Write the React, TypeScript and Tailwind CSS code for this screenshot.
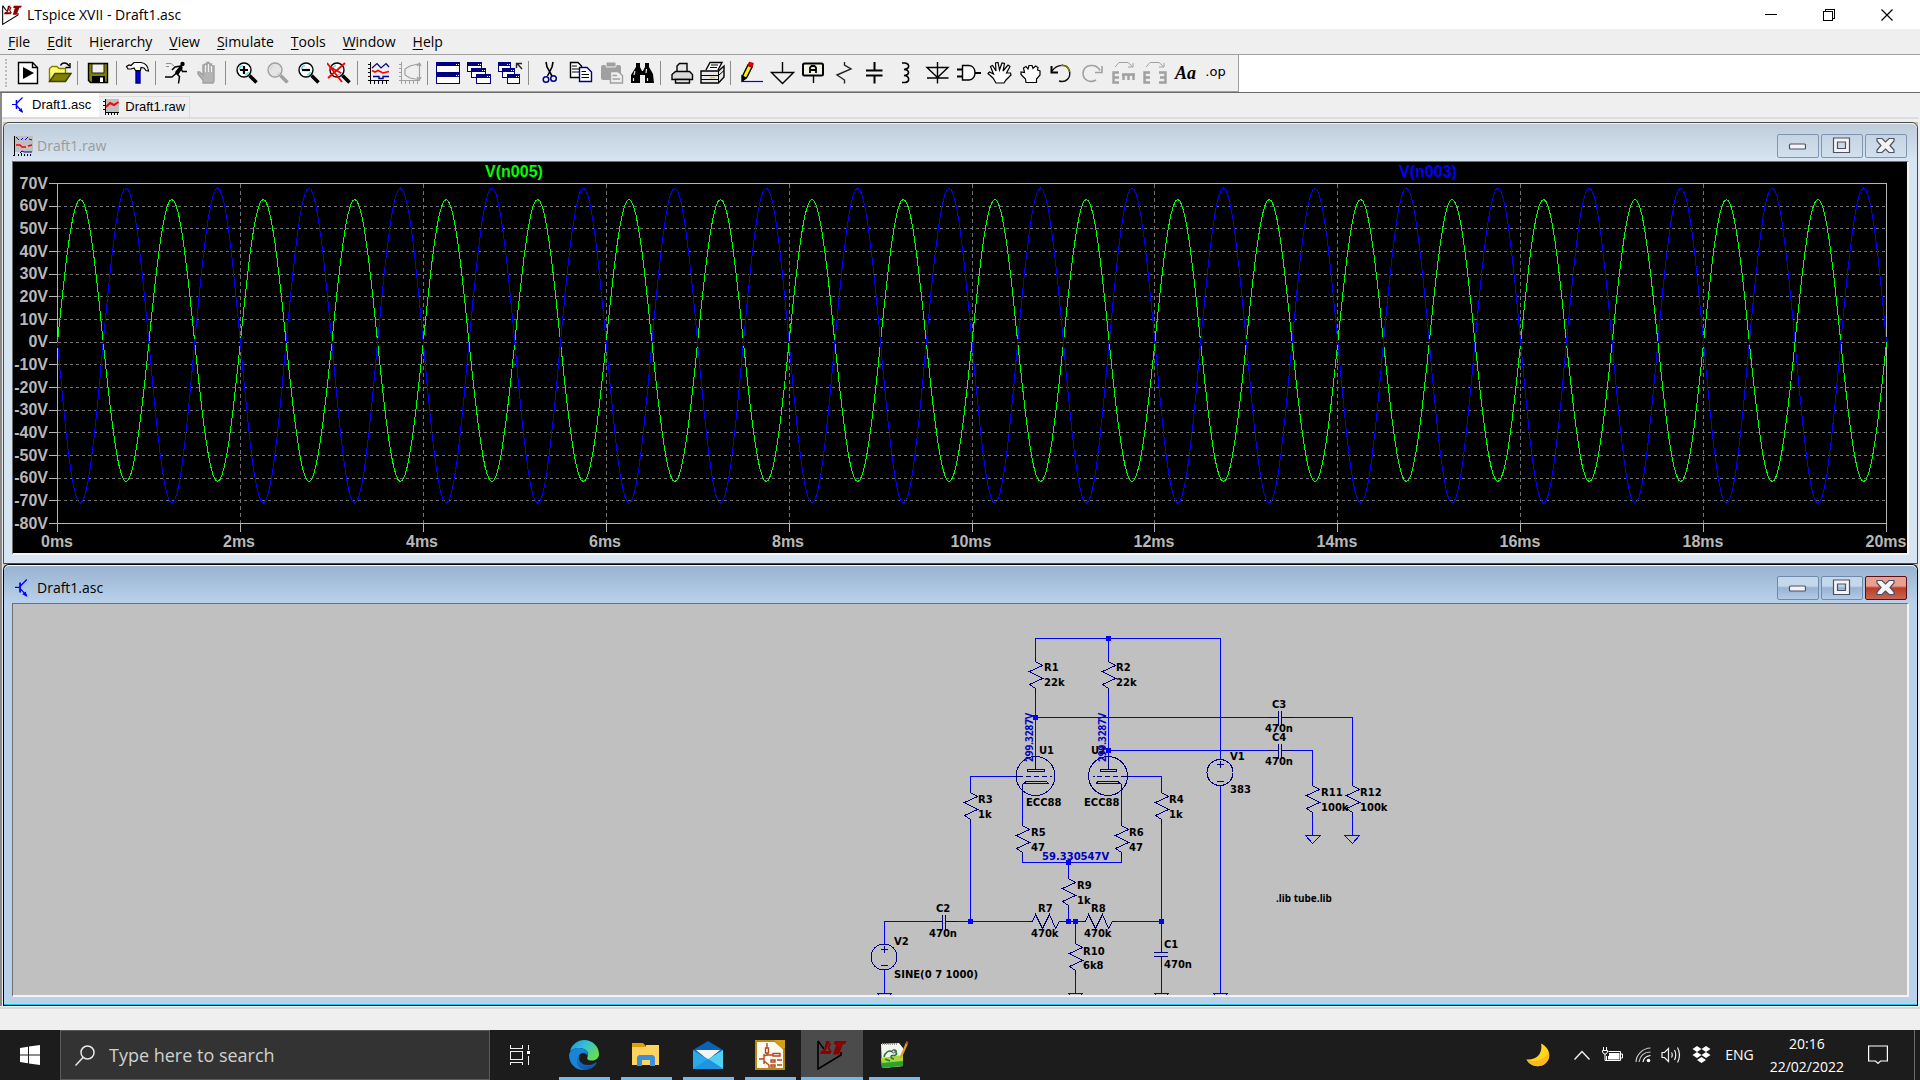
import React from "react";

/* ---------- shared bits ---------- */

type Kids = { children?: React.ReactNode };

function LtLogo({ size }: { size: string }) {
  return (
    <svg className={size} viewBox="0 0 30 30" fill="none" aria-hidden="true">
      <path d="M1 1V29L24 15V12M1 1L7 9" stroke="#000" strokeWidth="1.6" />
      <path d="M9 1H13L12 3L8.500 11H14L13 14H3L4 11L7 10Z" fill="#8b0000" />
      <path d="M18 1H30L28 4H26L22 14.500H16L20.500 4.500H17Z" fill="#8b0000" />
      <path d="M13.500 3L11.500 8L14 12.500M17.500 2L20 5L18 11" stroke="#8b0000" strokeWidth="1.600" />
    </svg>
  );
}

function Ico({ children }: Kids) {
  return (
    <svg className="h-6 w-[25px]" viewBox="0 0 25 24" fill="none" stroke="#000" strokeWidth="1.4" aria-hidden="true">
      {children}
    </svg>
  );
}

/* ---------- toolbar ---------- */

const lens = (stroke: string, glass: string) => (
  <>
    <circle cx="10" cy="9" r="7" fill={glass} stroke={stroke} />
    <path d="M5.500 9A4.500 4.500 0 0 1 9 4.500M11 14A5 5 0 0 0 14.500 11" stroke={stroke === "#000" ? "#5fe0e8" : "#d8d8d8"} strokeWidth="1.600" />
    <path d="M15.500 14.500L22.500 21.500" stroke={stroke} strokeWidth="3.600" />
  </>
);

const miniWindow = (x: number, y: number, w: number, h: number) => (
  <g key={x + "-" + y} shapeRendering="crispEdges">
    <rect x={x} y={y} width={w} height={h} fill="#fff" stroke="none" />
    <rect x={x} y={y} width={w} height={h} stroke="#000080" strokeWidth="1" fill="none" />
    <rect x={x} y={y} width={w} height="3" fill="#000080" stroke="none" />
    <rect x={x + w - 4} y={y + 1} width="1" height="1" fill="#fff" stroke="none" />
    <rect x={x + w - 2} y={y + 1} width="1" height="1" fill="#fff" stroke="none" />
  </g>
);

const axes = (c: string) => (
  <path d="M4.500 1V20M2 19.500H23M2 3.500H4M2 7.500H4M2 11.500H4M2 15.500H4M8.500 20V23M12.500 20V23M16.500 20V23M20.500 20V23M4.500 20V23" stroke={c} strokeWidth="1" shapeRendering="crispEdges" />
);

type Tool = { name: string; icon: React.ReactNode };

const groups: Tool[][] = [
  [
    { name: "New schematic", icon: <><path d="M2.500 1.500H16.500L21.500 6.500V22.500H2.500Z" fill="#fff" /><path d="M16.500 1.500V6.500H21.500" /><path d="M7 6V18L18 12Z" fill="#000" stroke="none" /></> },
    { name: "Open", icon: <><path d="M2.500 20V7.500L5 5.500H10L12 7.500H18.500V12" fill="#ffff70" stroke="#808000" /><path d="M2.500 20.500L8 12.500H24L18.500 20.500Z" fill="#808000" stroke="#404000" /><path d="M13.500 4.500C15 1 20 1 22 5M23 2V6.500H18.500" /></> },
  ],
  [
    { name: "Save", icon: <><path d="M2.500 2.500H21.500V21.500H4.500L2.500 19.500Z" fill="#808000" /><path d="M6 3H18V12H6Z" fill="#efefef" stroke="#202000" strokeWidth="1" /><path d="M6 15H19V22H6Z" fill="#000" stroke="none" /><path d="M14 16.500H17V21H14Z" fill="#fff" stroke="none" /></> },
  ],
  [
    { name: "Control panel", icon: <><path d="M11 10H15V22H11Z" fill="#0000e0" stroke="#000080" /><path d="M1.500 5.500L4 4L6 4.500L9 1.500H16C20 2 23 5 23.500 10L21 9.500L19 7L16 6.500L15.500 9.500H10.500L9 7L6 8H3Z" fill="#fafafa" strokeWidth="1.200" /></> },
  ],
  [
    { name: "Run", icon: <><circle cx="18.500" cy="3" r="2.200" fill="#000" stroke="none" /><path d="M17 5L11 6L8 9M16.500 6L12 12L15.500 15.500L14.500 22.500M12 12.500L8 16H1M16.500 6.500L18.500 10.500H23" strokeWidth="1.500" /><path d="M17 5L12 11L14 13L18 7Z" fill="#000" /><path d="M2 2.500H7L10 5M2 5.500H5" stroke="#909090" strokeWidth="1" /></> },
    { name: "Halt", icon: <><path d="M8 22V19L3 13V11H4.500L8 14V4H10V3H12V1.500H14V3H16.500V5H19V20L18 22Z" fill="#b4b4b4" stroke="#a0a0a0" /><path d="M10.500 4V11M13.500 3V11M16.500 5V11" stroke="#efefef" strokeWidth="1" /></> },
  ],
  [
    { name: "Zoom area", icon: <>{lens("#000", "#fff")}<path d="M6 9H14M10 5V13" strokeWidth="2.200" /></> },
    { name: "Pan", icon: lens("#a0a0a0", "#e4e4e4") },
    { name: "Zoom back", icon: <>{lens("#000", "#fff")}<path d="M6 9H14" strokeWidth="2.200" /></> },
    { name: "Zoom full extents", icon: <>{lens("#000", "#fff")}<path d="M0 2L15 21M18 2L1 17M3 6L14 12" stroke="#f00" strokeWidth="1.800" /></> },
  ],
  [
    { name: "Autorange", icon: <>{axes("#000")}<path d="M6 7L11 2.500L15 7L20 2.500L23 6" stroke="#000080" strokeWidth="1.200" /><path d="M6 9.500L9 11L12 9.500L17 12L23 10.500" stroke="#f00" strokeWidth="1.600" /><path d="M7 15.500H13V17.500H17V15.500H23" stroke="#000080" /></> },
    { name: "Plot settings", icon: <>{axes("#a0a0a0")}<path d="M22.500 2V19M21 3L13 5L8 8V14L13 17L21 18.500M20 5L22.500 2L24 5M20 16L22.500 19L24 16" stroke="#a0a0a0" strokeWidth="1.200" /></> },
  ],
  [
    { name: "Tile windows", icon: <>{miniWindow(0.5, 1.5, 23, 10)}{miniWindow(0.5, 12.5, 23, 10)}</> },
    { name: "Cascade windows", icon: <>{miniWindow(0.5, 1.5, 14, 9)}{miniWindow(4.5, 7.5, 14, 9)}{miniWindow(9.5, 13.5, 14, 9)}</> },
    { name: "Close all windows", icon: <>{miniWindow(0.5, 1.500, 12, 9)}{miniWindow(4.5, 7.5, 12, 9)}{miniWindow(9.5, 13.5, 12, 9)}<path d="M24 8L19 2.500M18.500 7V2.500H24" stroke="#222" /></> },
  ],
  [
    { name: "Cut", icon: <><path d="M9 1L10 6L15 15M16 1L15 6L10.500 15" strokeWidth="1.600" /><circle cx="9" cy="18.500" r="2.800" stroke="#000080" strokeWidth="1.500" /><circle cx="16.500" cy="17.500" r="2.800" stroke="#000080" strokeWidth="1.500" /></> },
    { name: "Copy", icon: <><path d="M2.500 1.500H10L13.500 5V16.500H2.500Z" fill="#fff" /><path d="M4 5H9M4 8H11M4 11H11" strokeWidth="1" /><path d="M11.500 6.500H19L23.500 11V20.500H11.500Z" fill="#fff" stroke="#000080" /><path d="M13.500 10.500H18M13.500 13.500H21M13.500 16.500H21" strokeWidth="1" /></> },
    { name: "Paste", icon: <><rect x="2" y="4" width="20" height="15" rx="2" fill="#a0a0a0" stroke="none" /><rect x="7" y="1" width="10" height="5" rx="1" fill="#a0a0a0" stroke="#efefef" strokeWidth="1" /><path d="M11.500 10.500H19L23.500 14.500V22H11.500Z" fill="#efefef" stroke="#a0a0a0" /><path d="M13.500 14.500H18M13.500 18H21" stroke="#a0a0a0" /></> },
    { name: "Find", icon: <><path d="M6 2H10V6L12 10H13L15 6V2H19V6L23 13L24 22H15V14H10V22H1V14L6 6Z" fill="#000" stroke="none" /><path d="M5 10L4 14M16.500 8L16 12M3.500 17V20M17.500 17V20" stroke="#e8e8e8" strokeWidth="1.200" /></> },
  ],
  [
    { name: "Print", icon: <><path d="M8 10V5L10.500 2.500H18V10" fill="#e6e6e6" /><path d="M6.500 10.500H20.500L23.500 13.500V18.500H3V13.500Z" fill="#d8d8d8" /><path d="M6.500 18.500V22H20.500V18.500Z" fill="#e4e4e4" /></> },
    { name: "Print setup", icon: <><path d="M6 9L10 1.500H22L18 9" fill="#fff" /><path d="M11 4H18M10 6.500H17" strokeWidth="1" /><path d="M1 10H18.500L24 5V16L18.500 22H1Z" fill="#e8e8e8" /><path d="M1 14.500H18.500L24 9.500M18.500 10V22M1 18.500H18.500" strokeWidth="1" /><path d="M10 16.500H15" stroke="#e0d000" /></> },
  ],
  [
    { name: "Draw wire", icon: <><path d="M4 14L9 4L13 6L8 16L4 19Z" fill="#ffef00" /><path d="M9 4L10.500 1.500L14 2.500L13 6Z" fill="#f00" stroke="#c00000" /><path d="M3 15V20L7 17Z" fill="#000" /><path d="M3 20.500H24" stroke="#0000ff" strokeWidth="1.200" /></> },
    { name: "Place ground", icon: <path d="M12.500 1V11M1.500 11.500H23.500L12.500 22.500Z" /> },
    { name: "Label net", icon: <><rect x="2" y="2.500" width="20" height="12" rx="1.500" fill="#f4f2e4" strokeWidth="2" /><path d="M12.500 15V22" /><path d="M9 12V6.500L10.500 5H13.500L15 6.500V12M9 9H15" strokeWidth="1.800" /></> },
    { name: "Resistor", icon: <path d="M12.500 1V4L19 8L5 14L12.500 19V22.500" stroke="#222" /> },
    { name: "Capacitor", icon: <path d="M11.500 1V9M11.500 15V22.500M3 9.500H19.500M3 14.500H19.500" strokeWidth="2" /> },
    { name: "Inductor", icon: <path d="M8 2H11C16 3 16 8 10 8.500C16 9 16 14 10 14.500C16 15 16 21 11 21.500H8" strokeWidth="1.600" /> },
    { name: "Diode", icon: <path d="M12.500 1V22.500M2 6.500H23L12.500 16.500ZM2 17H23.500" /> },
    { name: "Component", icon: <><path d="M6.500 4.500H13C21 5 21 18.500 13 19H6.500Z" fill="#fafafa" /><path d="M1 8.500H6M1 15.500H6M19 12H25" strokeWidth="1.800" /></> },
    { name: "Move", icon: <path d="M9 22L6 17L1 12.500L2.500 11L6.500 13L3.500 5.500L5.500 4.500L9 10L8.500 2L11 1.500L12.500 9L15 2L17.500 2.500L16 10L21 4L23 5.500L19.500 12H23.500L24 14L19 19L17 22Z" fill="#fff" strokeWidth="1.200" /> },
    { name: "Drag", icon: <path d="M8 21.500L7.500 18L3 13.500V11L6.500 11.500L5.500 7L8 5.500L10 8L11 4.500H14L15 7.500L17.500 5L20 6.500L19.500 9L22 10V14L18.500 18V21.500Z" fill="#fff" strokeWidth="1.200" /> },
    { name: "Undo", icon: <><path d="M3 10C8 3 18 2 20.500 10C22 17 17 22 10 20" stroke="#111" strokeWidth="1.500" /><path d="M12 4.500C17 4 20 7 20.500 11" stroke="#808000" strokeWidth="1.400" /><path d="M2.500 5V11.500H9" fill="none" strokeWidth="2" /></> },
    { name: "Redo", icon: <path d="M20 9.500C16 2 4 3 3 12C3 20 11 22 16 19M22 5V11.500H15" stroke="#a0a0a0" strokeWidth="1.600" /> },
    { name: "Rotate", icon: <><path d="M4 6L8 1.500H17L21 5M22 2V6H17" stroke="#a0a0a0" strokeWidth="1" /><path d="M8 11.500H2.500V21.500H8M2.500 16.500H8M11 13.500H24M12.500 13V19M17.500 13V19M22.500 13V19" stroke="#a0a0a0" strokeWidth="2.400" /></> },
    { name: "Mirror", icon: <><path d="M4 6L8 1.500H17L21 5M22 2V6H17" stroke="#a0a0a0" strokeWidth="1" /><path d="M8 11.500H2.500V21.500H8M2.500 16.500H8M17 11.500H23.500V21.500H17M18 16.500H23" stroke="#a0a0a0" strokeWidth="2.400" /></> },
    { name: "Text", icon: null },
    { name: "SPICE directive", icon: null },
  ],
];

function ToolButton({ tool }: { tool: Tool }) {
  return (
    <button type="button" aria-label={tool.name} className="flex h-8 w-[31px] items-center justify-center">
      {tool.name === "Text" ? (
        <span className="font-['Liberation_Serif',serif] text-[18px] leading-6 font-bold italic">Aa</span>
      ) : tool.name === "SPICE directive" ? (
        <span className="pr-0.5 pb-0.5 font-['DejaVu_Sans',sans-serif] text-[13px] leading-5">.op</span>
      ) : (
        <Ico>{tool.icon}</Ico>
      )}
    </button>
  );
}

function Toolbar() {
  return (
    <div className="flex h-[39px] border-t border-t-[#a0a0a0] border-b border-b-[#696969] bg-white" role="toolbar">
      <div className="flex items-center border-r border-b border-[#a0a0a0] bg-[#efefef] pr-1.5 pl-[5px]">
        <div className="mr-1.5 h-7 w-0.5 border-l-2 border-dotted border-[#bdbdbd]" />
        {groups.map((g, i) => (
          <React.Fragment key={i}>
            {i > 0 && (
              <div className="flex w-2 pl-0.5">
                <div className="h-6 w-px bg-[#8c8c8c]" />
              </div>
            )}
            {g.map((t) => (
              <ToolButton key={t.name} tool={t} />
            ))}
          </React.Fragment>
        ))}
      </div>
    </div>
  );
}

/* ---------- application chrome ---------- */

function TitleBar() {
  return (
    <header className="flex h-[29px] items-center bg-white pr-1 pl-0.5">
      <LtLogo size="size-5" />
      <h1 className="ml-[5px] flex-1 text-[14px] leading-5">LTspice XVII - Draft1.asc</h1>
      <button type="button" aria-label="Minimise" className="flex h-7 w-[58px] items-center justify-center">
        <svg className="size-3" viewBox="0 0 12 12" stroke="#000" shapeRendering="crispEdges"><path d="M0 5.500H12" /></svg>
      </button>
      <button type="button" aria-label="Restore" className="flex h-7 w-[58px] items-center justify-center">
        <svg className="size-3" viewBox="0 0 12 12" stroke="#000" fill="none" shapeRendering="crispEdges"><path d="M.5 2.500H9.500V11.500H.5ZM2.500 2.500V.5H11.500V9.500H9.500" /></svg>
      </button>
      <button type="button" aria-label="Close" className="flex h-7 w-[58px] items-center justify-center">
        <svg className="size-3" viewBox="0 0 12 12" stroke="#000" strokeWidth="1.200"><path d="M.5 .5L11.500 11.500M11.500 .5L.5 11.500" /></svg>
      </button>
    </header>
  );
}

const menus: [string, string, string][] = [
  ["", "F", "ile"],
  ["", "E", "dit"],
  ["H", "i", "erarchy"],
  ["", "V", "iew"],
  ["", "S", "imulate"],
  ["", "T", "ools"],
  ["", "W", "indow"],
  ["", "H", "elp"],
];

function MenuBar() {
  return (
    <nav className="flex h-[25px] items-center gap-px bg-[#efefef]">
      {menus.map(([a, b, c]) => (
        <button key={a + b + c} type="button" className="px-2 text-[14px] leading-5">
          {a}
          <span className="underline underline-offset-2">{b}</span>
          {c}
        </button>
      ))}
    </nav>
  );
}

function TransistorIcon({ size }: { size: string }) {
  return (
    <svg className={size} viewBox="0 0 16 16" fill="none" stroke="#0000ff" strokeWidth="1.200" aria-hidden="true">
      <path d="M0 7.500H4M5 6L10.500 0.500M5 9L10.500 15" />
      <path d="M4.500 3V12" strokeWidth="1.600" />
      <path d="M11 16L6.500 13.500L9.500 11Z" fill="#0000ff" stroke="none" />
    </svg>
  );
}

function FileTabs() {
  return (
    <div className="mr-0.5 ml-0.5 flex h-[29px] items-start bg-[#efefef]">
      <div role="tablist" className="flex h-[26px] flex-1 items-end border-b-2 border-[#dcdcdc] font-['Liberation_Sans',sans-serif] text-[13px] leading-4">
        <button role="tab" aria-selected="true" type="button" className="flex h-6 items-center bg-white pr-2 pl-2.5">
          <TransistorIcon size="size-4" />
          <span className="ml-1">Draft1.asc</span>
        </button>
        <button role="tab" aria-selected="false" type="button" className="flex h-[21px] items-center border-t border-r border-[#dcdcdc] pr-1 pl-1">
          <svg className="size-4" viewBox="0 0 16 16" fill="none" aria-hidden="true">
            <path d="M2 0H16V13H2Z" fill="#c0c0c0" />
            <path d="M2.500 0V16M0 2.500H2M0 6.500H2M0 10.500H2M2 13.500H16M5.500 14V16M8.500 14V16M11.500 14V16M14.500 14V16" stroke="#000" />
            <path d="M3 8L7 4L11 6L15.500 3" stroke="#f00" strokeWidth="2" />
          </svg>
          <span className="ml-1.5">Draft1.raw</span>
        </button>
      </div>
    </div>
  );
}

/* ---------- child windows ---------- */

function WindowButton({ kind, active }: { kind: "min" | "max" | "close"; active: boolean }) {
  const close = active && kind === "close";
  const tone = close
    ? "border-[#5a1010] from-[#e8a090] from-40% via-[#b83c28] via-50% to-[#c86450]"
    : active
      ? "border-[#7088aa] from-[#c4d8ec] from-40% via-[#98b2d0] via-50% to-[#b4cce6]"
      : "border-[#8095b4] from-[#c6d4e2] to-[#d2dfec]";
  return (
    <button type="button" aria-label={kind} className={"flex h-6 w-[42px] items-center justify-center rounded-[2px] border bg-linear-to-b " + tone}>
      <svg className="h-[17px] w-5" viewBox="0 0 20 17" fill="#f4f4f4" stroke="#4a5068" strokeWidth="1.200" aria-hidden="true">
        {kind === "min" && <rect x="1.500" y="7" width="16" height="5" rx="1" />}
        {kind === "max" && <path fillRule="evenodd" d="M1.500 1H17.500V15.500H1.500ZM5.500 5V11.500H13.500V5Z" />}
        {kind === "close" && <path d="M1 1.500H6L9.500 5L13 1.500H18V4L14 8.500L18 13V15.500H13L9.500 12L6 15.500H1V13L5 8.500L1 4Z" />}
      </svg>
    </button>
  );
}

function WindowButtons({ active }: { active: boolean }) {
  return (
    <div className="ml-auto flex gap-0.5">
      <WindowButton kind="min" active={active} />
      <WindowButton kind="max" active={active} />
      <WindowButton kind="close" active={active} />
    </div>
  );
}

/* ---------- waveform plot ---------- */

const X0 = 57.5;
const X1 = 1886.5;
const Y_TOP = 183.5;
const Y_BOTTOM = 523.5;
const px = (ms: number) => X0 + (ms * (X1 - X0)) / 20;
const py = (v: number) => Y_TOP + ((70 - v) * (Y_BOTTOM - Y_TOP)) / 150;

function trace(sign: number, peak: number, trough: number) {
  const pts: string[] = [];
  for (let i = 0; i <= 800; i++) {
    const ms = i / 40;
    const s = sign * Math.sin(2 * Math.PI * ms);
    pts.push(px(ms).toFixed(1) + "," + py(s > 0 ? s * peak : s * trough).toFixed(1));
  }
  return pts.join(" ");
}

function Plot() {
  const volts = Array.from({ length: 16 }, (_, i) => 70 - i * 10);
  const times = Array.from({ length: 11 }, (_, i) => i * 2);
  return (
    <svg className="block h-auto w-full bg-black" viewBox="13 162 1894 391" role="img" aria-label="Waveforms">
      <g shapeRendering="crispEdges" fill="none">
        {volts.slice(1, -1).map((v) => (
          <path key={v} d={`M${X0} ${Math.round(py(v) - 0.5) + 0.5}H${X1}`} stroke="#707070" strokeDasharray="3 3" />
        ))}
        {times.slice(1, -1).map((t) => (
          <path key={t} d={`M${Math.floor(px(t)) + 0.5} ${Y_TOP}V${Y_BOTTOM}`} stroke="#707070" strokeDasharray="4 3" />
        ))}
        <rect x={X0} y={Y_TOP} width={X1 - X0} height={Y_BOTTOM - Y_TOP} stroke="#b4b4b4" />
        {volts.map((v) => (
          <path key={v} d={`M49 ${Math.round(py(v) - 0.5) + 0.5}H${X0}`} stroke="#b4b4b4" />
        ))}
        {times.map((t) => (
          <path key={t} d={`M${Math.floor(px(t)) + 0.5} ${Y_BOTTOM}V532`} stroke="#b4b4b4" />
        ))}
        <polyline points={trace(1, 63, 61.5)} stroke="#00ff00" />
        <polyline points={trace(-1, 68, 71)} stroke="#0000ff" />
      </g>
      <g className="font-['Liberation_Sans',sans-serif] text-[16px] font-bold" fill="#b8b8b8">
        {volts.map((v) => (
          <text key={v} x="48" y={Math.round(py(v)) + 5} textAnchor="end">{v}V</text>
        ))}
        {times.map((t) => (
          <text key={t} x={Math.round(px(t)) - 1} y="547" textAnchor="middle">{t}ms</text>
        ))}
        <text x="514" y="177" textAnchor="middle" fill="#00ff00">V(n005)</text>
        <text x="1428" y="177" textAnchor="middle" fill="#0000ff">V(n003)</text>
      </g>
    </svg>
  );
}

/* ---------- schematic ---------- */

const resV = (x: number, y: number) => `M${x} ${y - 4}V${y}L${x + 7} ${y + 4}L${x - 6} ${y + 10}L${x + 7} ${y + 17}L${x - 6} ${y + 23}L${x} ${y + 27}V${y + 31}`;
const resH = (x: number, y: number) => `M${x - 4} ${y}H${x}L${x + 3} ${y - 7}L${x + 10} ${y + 7}L${x + 17} ${y - 7}L${x + 23} ${y + 7}L${x + 27} ${y}H${x + 30}`;
const capH = (x: number, y: number) => `M${x - 11} ${y}H${x}M${x} ${y - 7}V${y + 8}M${x + 3} ${y - 7}V${y + 8}M${x + 3} ${y}H${x + 14}`;

const wires = [
  "M1035.5 658V638.5H1220.5V759",
  "M1108.5 638V658",
  "M1035.5 689V756M1108.5 689V756",
  "M1035.5 717.5H1268M1292 717.5H1352.5V783",
  "M1108.5 750.5H1268M1292 750.5H1312.5V783",
  "M1017 776.5H970.5V789M970.5 821V921.5",
  "M1127 776.5H1161.5V789M1161.5 821V942",
  "M1022.5 795V822M1121.5 795V822",
  "M1022.5 855V862.5H1121.5V855",
  "M1068.5 862V875M1068.5 907V921.5",
  "M884.5 944V921.5H932M957 921.5H1029M1061 921.5H1083M1115 921.5H1161.5",
  "M1075.5 921V940M1075.5 974V993.5",
  "M884.5 970V993.5M1161.5 966V993.5M1220.5 786V993.5",
  "M1312.5 816V835.5M1352.5 816V835.5",
  "M1305.5 835.5H1320.5L1312.5 843.5ZM1344.5 835.5H1359.5L1352.5 843.5Z",
  "M877.5 993.5H891.5L884.5 1001.5ZM1068.5 993.5H1082.5L1075.5 1001.5ZM1154.5 993.5H1168.5L1161.5 1001.5ZM1213.5 993.5H1227.5L1220.5 1001.5Z",
].join("");

const parts = [
  resV(1035.5, 661.5), resV(1108.5, 661.5), resV(970.5, 792.5), resV(1161.5, 792.5),
  resV(1022.5, 825.5), resV(1121.5, 825.5), resV(1068.5, 878.5), resV(1075.5, 943.5),
  resV(1312.5, 785.5), resV(1352.5, 785.5),
  resH(1032.5, 921.5), resH(1085.5, 921.5),
  capH(1278.5, 717.5), capH(1278.5, 750.5), capH(942.5, 921.5),
  "M1161.5 942V952.5M1154 952.5H1168M1154 956.5H1168M1161.5 956.5V967",
  "M1035.5 756V769.5M1027.5 769.5H1044.5V771.5H1027.5ZM1014 776.5H1023M1026 776.5H1031M1034 776.5H1039M1042 776.5H1047M1050 776.5H1052M1022.5 795V784.5L1026 781.5H1046L1049 783.5M1024 783.5H1049",
  "M1108.5 756V769.5M1100.5 769.5H1116.5V771.5H1100.5ZM1130 776.5H1121M1118 776.5H1113M1110 776.5H1105M1102 776.5H1097M1095 776.5H1093M1121.5 795V784.5L1118 781.5H1098L1096 783.5M1096 783.5H1121",
  "M1217 764.5H1224M1220.5 761V768M1217 781.5H1224M881 949.5H888M884.5 946V953M881 965.5H888",
].join("");

const junctions = [[1108, 638], [1035, 717], [1108, 750], [1068, 862], [970, 921], [1068, 921], [1075, 921], [1161, 921]];

const labels: [string, number, number][] = [
  ["R1", 1044, 671], ["22k", 1044, 686], ["R2", 1116, 671], ["22k", 1116, 686],
  ["U1", 1039, 754], ["U2", 1091, 754], ["ECC88", 1026, 806], ["ECC88", 1084, 806],
  ["R3", 978, 803], ["1k", 978, 818], ["R4", 1169, 803], ["1k", 1169, 818],
  ["R5", 1031, 836], ["47", 1031, 851], ["R6", 1129, 836], ["47", 1129, 851],
  ["R9", 1077, 889], ["1k", 1077, 904], ["R7", 1038, 912], ["470k", 1031, 937],
  ["R8", 1091, 912], ["470k", 1084, 937], ["C2", 936, 912], ["470n", 929, 937],
  ["V2", 894, 945], ["SINE(0 7 1000)", 894, 978], ["R10", 1083, 955], ["6k8", 1083, 969],
  ["C1", 1164, 948], ["470n", 1164, 968], ["V1", 1230, 760], ["383", 1230, 793],
  ["C3", 1272, 708], ["470n", 1265, 732], ["C4", 1272, 741], ["470n", 1265, 765],
  ["R11", 1321, 796], ["100k", 1321, 811], ["R12", 1360, 796], ["100k", 1360, 811],
];

function Schematic() {
  return (
    <svg className="block h-auto w-full bg-[#c0c0c0]" viewBox="13 604 1894 391" role="img" aria-label="Schematic">
      <g shapeRendering="crispEdges" fill="none">
        <path d={wires} stroke="#0000ff" />
        <path d={parts} stroke="#000080" />
        <circle cx="1035.5" cy="776" r="19.500" stroke="#000080" />
        <circle cx="1108" cy="776" r="19.500" stroke="#000080" />
        <circle cx="1220" cy="772.500" r="13" stroke="#000080" />
        <circle cx="884" cy="957" r="13" stroke="#000080" />
        {junctions.map(([x, y]) => (
          <rect key={x + "," + y} x={x - 2} y={y - 2} width="5" height="5" fill="#0000ff" />
        ))}
      </g>
      <g className="font-['DejaVu_Sans',sans-serif] text-[10px] font-bold" fill="#000">
        {labels.map(([t, x, y]) => (
          <text key={t + x + y} x={x} y={y}>{t}</text>
        ))}
        <text x="1042" y="860" fill="#0000c0">59.330547V</text>
      </g>
      <g className="font-['Noto_Sans',sans-serif] text-[10px] font-bold">
        <text x="1276" y="902">.lib tube.lib</text>
        <text transform="translate(1033 762) rotate(-90)" fill="#0000c0">299.3287V</text>
        <text transform="translate(1106 762) rotate(-90)" fill="#0000c0">299.3287V</text>
      </g>
    </svg>
  );
}

function PlotWindow() {
  return (
    <section className="rounded-t-md border border-[#4a4a4a] bg-[#d7e4f2] px-2 pb-2">
      <div className="-mx-2 flex h-[38px] items-center rounded-t-md border-t border-white/60 bg-linear-to-b from-[#bfcddb] to-[#d7e4f2] pt-1.5 pr-2.5 pl-[9px]">
        <svg className="size-5" viewBox="0 0 20 20" fill="none" aria-hidden="true">
          <path d="M2 0H20V16H2Z" fill="#c0c0c0" />
          <path d="M1.500 0V20M0 19.500H2M5.500 18V20M8.500 17V20M11.500 18V20M14.500 18V20M17.500 18V20" stroke="#000" />
          <path d="M3 1L6 4M8 4L10 2M12 4L15 1M16 3L19 4" stroke="#00f" />
          <path d="M3 9H7L9 11H13M15 10L19 9" stroke="#f00" strokeWidth="1.500" />
          <path d="M7 17L9 15L11 16H19" stroke="#000080" />
        </svg>
        <h2 className="ml-1 text-[14px] leading-5 text-[#9a9a9a]">Draft1.raw</h2>
        <WindowButtons active={false} />
      </div>
      <div className="border-t border-r-2 border-b-2 border-l border-t-[#707070] border-r-[#f4f4f4] border-b-[#f4f4f4] border-l-[#707070]">
        <Plot />
      </div>
    </section>
  );
}

function SchematicWindow() {
  return (
    <section className="rounded-t-md border border-b-0 border-black bg-[#b9d1ea]">
      <div className="flex h-[38px] items-center rounded-t-md border-t border-white bg-linear-to-b from-[#99b4d1] to-[#b9d1ea] pt-1.5 pr-2.5 pl-[11px]">
        <TransistorIcon size="size-[18px]" />
        <h2 className="ml-1 text-[14px] leading-5">Draft1.asc</h2>
        <WindowButtons active />
      </div>
      <div className="border-b border-b-black px-2 shadow-[inset_0_-1px_0_#20c8e0]">
        <div className="border-t border-r-2 border-b-2 border-l border-t-[#707070] border-r-[#f4f4f4] border-b-[#f4f4f4] border-l-[#707070]">
          <Schematic />
        </div>
        <div className="h-2" />
      </div>
    </section>
  );
}

/* ---------- taskbar ---------- */

const apps: { name: string; active?: boolean; icon: React.ReactNode }[] = [
  {
    name: "Microsoft Edge",
    icon: (
      <svg className="size-[30px]" viewBox="0 0 30 30" aria-hidden="true">
        <defs>
          <linearGradient id="edgeTop" x1="0" y1="0" x2="1" y2="0.600"><stop offset="0" stopColor="#1c8fd8" /><stop offset="0.500" stopColor="#35c1d6" /><stop offset="1" stopColor="#66dd50" /></linearGradient>
          <linearGradient id="edgeLow" x1="0" y1="0" x2="0.600" y2="1"><stop offset="0" stopColor="#1a78cc" /><stop offset="1" stopColor="#0f55a8" /></linearGradient>
        </defs>
        <path d="M1 11C3 4 9 0 15 0C24 0 30 7 30 14C30 18 27 20.500 23 20.500C19 20.500 17.500 19 18.500 17C21 12 16 8 10 8C6 8 3 9.500 1 11Z" fill="url(#edgeTop)" />
        <path d="M0 15C1 10 5 8 10 8C16 8 20 12 18.500 16C17 12 11 12 9 17C7 23 12 29 17 30C7 31 0 24 0 15Z" fill="#1b84d6" />
        <path d="M11 14C8 20 12 25 19 25C23 25 25 23.500 27 22.500C27.500 22.500 28 23 27.500 23.500C25 27.500 20.500 30 16 30C10 29 7 24 8 19C8.500 16.500 9.500 15 11 14Z" fill="url(#edgeLow)" />
      </svg>
    ),
  },
  {
    name: "File Explorer",
    icon: (
      <svg className="size-[30px]" viewBox="0 0 30 30" aria-hidden="true">
        <path d="M1 3H12L14 5V8H1Z" fill="#e0a00c" />
        <path d="M1 7H14L15 5H28V25H1Z" fill="#ffd45e" />
        <path d="M6 26V17L8 15H22L24 17V26H19V20H11V26Z" fill="#3c8fdb" />
      </svg>
    ),
  },
  {
    name: "Mail",
    icon: (
      <svg className="size-[30px]" viewBox="0 0 30 30" aria-hidden="true">
        <path d="M0 10L15 1L30 10V14H0Z" fill="#0a62b5" />
        <path d="M3 10H27L15 20Z" fill="#f5f5f5" />
        <path d="M0 10L15 19L30 29H0Z" fill="#2aa8ea" />
        <path d="M30 10L15 19L30 29Z" fill="#50d0f5" />
        <path d="M0 29L15 19L30 29Z" fill="#1e95e0" />
      </svg>
    ),
  },
  {
    name: "Circuit editor",
    icon: (
      <svg className="size-[30px]" viewBox="0 0 30 30" fill="none" aria-hidden="true">
        <path d="M1 1H20L29 9V29H1Z" fill="#fffaf0" stroke="#b88a10" strokeWidth="2" />
        <path d="M19 0H30V8H27Z" fill="#d8a010" />
        <path d="M12 3V8M10.500 8H13.500V13H10.500ZM12 13V15M9 16L12 15H18M18 13.500H25V16H18ZM9 14V24M4 19H9M9 21L14 25V28M16 20H20V22H16ZM22 20H27M16 25H20V27H16ZM22 25H27" stroke="#b04a20" strokeWidth="1.400" />
      </svg>
    ),
  },
  { name: "LTspice XVII", active: true, icon: <LtLogo size="size-[30px]" /> },
  {
    name: "Notepad++",
    icon: (
      <svg className="size-[30px]" viewBox="0 0 30 30" fill="none" aria-hidden="true">
        <path d="M2 4L20 3L24 8V26L3 28Z" fill="#f2f4ee" />
        <path d="M2 18L24 15V26L3 28Z" fill="#a8d838" />
        <path d="M3 23L24 21V26L3 28Z" fill="#2fa032" />
        <path d="M5 17C6 12 10 10 13 11.500C15 9 18 10 17 13C19 14 16 16 13 15.500C11 16 12 19 15 19M6 19L11 21" stroke="#287830" strokeWidth="1.500" />
        <circle cx="14.500" cy="11.500" r="1.500" fill="#d8e8d0" stroke="#345" strokeWidth="0.800" />
        <path d="M3 4H18" stroke="#999" strokeDasharray="1 1" strokeWidth="2" />
        <path d="M28 3L21.500 18" stroke="#e0a020" strokeWidth="2.200" />
        <path d="M28.500 1.500L27.500 4" stroke="#c04040" strokeWidth="2.200" />
      </svg>
    ),
  },
];

function Taskbar() {
  return (
    <footer className="flex h-[50px] items-stretch bg-[#1c1c1c] text-white">
      <button type="button" aria-label="Start" className="flex w-[60px] items-center justify-center">
        <svg className="size-5" viewBox="0 0 20 20" fill="#fff" aria-hidden="true">
          <path d="M0 3L8 1.800V9.500H0ZM9 1.600L20 0V9.500H9ZM0 10.500H8V18.200L0 17ZM9 10.500H20V20L9 18.400Z" />
        </svg>
      </button>
      <label className="flex w-[430px] items-center border border-[#5a5a5a] bg-[#333333] pl-3.5">
        <svg className="h-[21px] w-5" viewBox="0 0 20 21" fill="none" stroke="#e8e8e8" strokeWidth="1.500" aria-hidden="true">
          <circle cx="12.500" cy="7.500" r="6.500" />
          <path d="M8 12.500L0.500 20.500" />
        </svg>
        <input type="text" aria-label="Type here to search" placeholder="Type here to search" className="ml-3.5 flex-1 bg-transparent text-[18px] leading-6 outline-none placeholder:text-[#d0d0d0]" />
      </label>
      <button type="button" aria-label="Task view" className="flex w-[63px] items-center pl-5">
        <svg className="size-5" viewBox="0 0 20 20" fill="none" stroke="#f0f0f0" shapeRendering="crispEdges" aria-hidden="true">
          <path d="M.5 0V3.500H12.500V0M.5 6.500H12.500V14.500H.5ZM.5 20V17.500H12.500V20M18.500 0V5M18.500 11V20" />
          <path d="M17 6H20V9H17Z" fill="#fff" stroke="none" />
        </svg>
      </button>
      {apps.map((a) => (
        <button key={a.name} type="button" aria-label={a.name} className={"flex w-[62px] flex-col items-center justify-between pt-2.5 " + (a.active ? "bg-[#4b4b4b]" : "")}>
          {a.icon}
          <span className={"h-[3px] bg-[#76b9ed] " + (a.active ? "w-full" : "w-[51px]")} />
        </button>
      ))}
      <div className="ml-auto flex items-center">
        <svg className="mr-6 size-6" viewBox="0 0 24 24" aria-label="Weather">
          <path d="M15 0.500C25 5 26 17 18 21.500C12 25 4 23 0.500 16.500C11 17.500 17 10 15 0.500Z" fill="#ffd51a" />
          <path d="M0.500 16.500C8 20 18 17 23 10C23 15 21 20 18 21.500C12 25 4 23 0.500 16.500Z" fill="#ffb81c" />
        </svg>
        <svg className="mr-3 h-4 w-4" viewBox="0 0 16 16" fill="none" stroke="#eee" strokeWidth="1.500" aria-hidden="true"><path d="M.5 12.500L8 4.500L15.500 12.500" /></svg>
        <svg className="mr-3 h-4 w-[21px]" viewBox="0 0 21 16" fill="none" stroke="#fff" aria-hidden="true">
          <path d="M6.500 4.500H18.500V13.500H4.500V9M19 7H20.500V11H19" />
          <path d="M7 6H17.500V12.500H6V9H7Z" fill="#fff" stroke="none" />
          <path d="M1.500 0V3M4.500 0V3M.5 3.500H5.500V5L4 7H2L.5 5ZM3 7V13.500H5" />
        </svg>
        <svg className="mr-2.5 size-4" viewBox="0 0 16 16" fill="none" stroke="#c8c8c8" strokeWidth="1.200" aria-hidden="true">
          <path d="M1 15C1 8 8 1 15.500 1M4 15C5 9 9 5 15.500 5" />
          <path d="M8 15C8.500 11.500 11 9 15.500 8.500" stroke="#fff" />
          <circle cx="13.500" cy="13.500" r="1.800" fill="#fff" stroke="none" />
        </svg>
        <svg className="mr-2.5 h-[18px] w-[21px]" viewBox="0 0 21 18" fill="none" stroke="#f0f0f0" strokeWidth="1.200" aria-hidden="true">
          <path d="M1 6.500H3.500L7.500 2.500V15.500L3.500 11.500H1ZM10.500 6.500Q12 9 10.500 11.500M13.500 4Q16 9 13.500 14M16.500 1.500Q20.500 9 16.500 16.500" />
        </svg>
        <svg className="mr-3.5 h-[18px] w-[19px]" viewBox="0 0 19 18" fill="#fff" aria-hidden="true">
          <path d="M5 0L9.500 3L5 6L.5 3ZM14 0L18.500 3L14 6L9.500 3ZM5 6L9.500 9L5 12L.5 9ZM14 6L18.500 9L14 12L9.500 9ZM9.500 11L14 14L9.500 17L5 14Z" />
        </svg>
        <span className="text-[14px] leading-5">ENG</span>
        <time className="ml-4 text-center text-[14px] leading-[23px]">
          20:16
          <br />
          22/02/2022
        </time>
        <button type="button" aria-label="Notifications" className="ml-6 flex h-full items-center pr-[26px]">
          <svg className="size-5" viewBox="0 0 20 20" fill="none" stroke="#fff" strokeWidth="1.200" aria-hidden="true">
            <path d="M.6 1H19.400V16H12.500L10 18.500L7.500 16H.6Z" />
          </svg>
        </button>
        <div className="mr-[5px] h-full w-px bg-[#6a6a6a]" />
      </div>
    </footer>
  );
}

export default function App() {
  return (
    <div className="flex min-h-screen flex-col bg-[#efefef] font-['Open_Sans','Noto_Sans',sans-serif] text-black">
      <TitleBar />
      <MenuBar />
      <Toolbar />
      <main className="border-l-2 border-[#8a8a8a]">
        <div className="-ml-0.5">
          <FileTabs />
        </div>
        <div className="mr-0.5 ml-px bg-[#c8c0a8]">
          <PlotWindow />
          <SchematicWindow />
        </div>
      </main>
      <div className="mt-px flex-1 border-t-2 border-[#d8d8d8]" />
      <Taskbar />
    </div>
  );
}
